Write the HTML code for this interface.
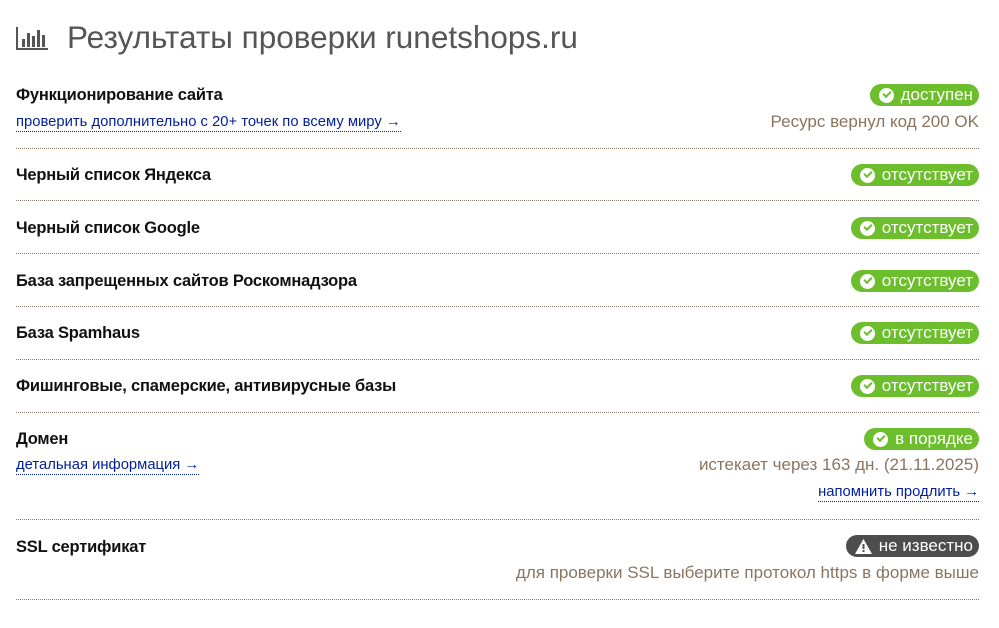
<!DOCTYPE html>
<html><head><meta charset="utf-8"><style>
body{margin:0;width:999px;height:628px;background:#fff;font-family:"Liberation Sans",Arial,sans-serif;position:relative;overflow:hidden}
.a{position:absolute}
.t{left:16px;font-size:16.5px;color:#111;font-weight:bold;letter-spacing:-0.2px}
.sep{left:16px;width:963px;border-top:1px dotted #8a7a6a;height:0}
.b{right:20px;height:22px;border-radius:11px;background:#6cbe2d;color:#fff;font-size:17px;line-height:22px;padding:0 6px 0 9px;display:flex;align-items:center;gap:7px;white-space:nowrap}
.b.g{background:#4d4d4d}
.ck{width:15px;height:15px;border-radius:50%;background:#fff;display:inline-block;position:relative}
.ck:after{content:"";position:absolute;left:4px;top:3px;width:6px;height:3px;border-left:2.5px solid #6cbe2d;border-bottom:2.5px solid #6cbe2d;transform:rotate(-45deg)}
.l{font-size:14.8px;color:#001f99;border-bottom:1px dotted #001f99;line-height:17px}
.r{right:20px;font-size:17px;color:#8a7560;text-align:right;white-space:nowrap}
</style></head><body>
<svg class="a" style="left:16px;top:27px" width="32" height="24" viewBox="0 0 32 24"><path d="M1 0V22H32" stroke="#555" stroke-width="2" fill="none"/><rect x="6" y="12" width="3" height="8" fill="#555"/><rect x="11" y="6" width="3" height="14" fill="#555"/><rect x="16" y="9" width="3" height="11" fill="#555"/><rect x="21" y="3" width="3" height="17" fill="#555"/><rect x="26" y="8" width="3" height="12" fill="#555"/></svg>
<div class="a" style="left:67px;top:19px;font-size:31.5px;color:#555;">Результаты проверки runetshops.ru</div>

<div class="a t" style="top:86px">Функционирование сайта</div>
<div class="a b" style="top:84px"><span class="ck"></span>доступен</div>
<div class="a l" style="left:16px;top:114px">проверить дополнительно с 20+ точек по всему миру →</div>
<div class="a r" style="top:112px">Ресурс вернул код 200 OK</div>
<div class="a sep" style="top:148px"></div>

<div class="a t" style="top:166px">Черный список Яндекса</div>
<div class="a b" style="top:164px"><span class="ck"></span>отсутствует</div>
<div class="a sep" style="top:200px"></div>

<div class="a t" style="top:219px">Черный список Google</div>
<div class="a b" style="top:217px"><span class="ck"></span>отсутствует</div>
<div class="a sep" style="top:253px"></div>

<div class="a t" style="top:272px">База запрещенных сайтов Роскомнадзора</div>
<div class="a b" style="top:270px"><span class="ck"></span>отсутствует</div>
<div class="a sep" style="top:306px"></div>

<div class="a t" style="top:324px">База Spamhaus</div>
<div class="a b" style="top:322px"><span class="ck"></span>отсутствует</div>
<div class="a sep" style="top:359px"></div>

<div class="a t" style="top:377px">Фишинговые, спамерские, антивирусные базы</div>
<div class="a b" style="top:375px"><span class="ck"></span>отсутствует</div>
<div class="a sep" style="top:412px"></div>

<div class="a t" style="top:430px">Домен</div>
<div class="a b" style="top:428px"><span class="ck"></span>в порядке</div>
<div class="a l" style="left:16px;top:457px">детальная информация →</div>
<div class="a r" style="top:455px">истекает через 163 дн. (21.11.2025)</div>
<div class="a l" style="right:20px;top:484px">напомнить продлить →</div>
<div class="a sep" style="top:519px"></div>

<div class="a t" style="top:538px">SSL сертификат</div>
<div class="a b g" style="top:535px"><svg width="17" height="15" viewBox="0 0 17 15"><path d="M8.5 0L17 15H0Z" fill="#fff"/><rect x="7.5" y="5" width="2" height="5" fill="#4d4d4d"/><rect x="7.5" y="11" width="2" height="2" fill="#4d4d4d"/></svg>не известно</div>
<div class="a r" style="top:563px">для проверки SSL выберите протокол https в форме выше</div>
<div class="a sep" style="top:599px"></div>
</body></html>
